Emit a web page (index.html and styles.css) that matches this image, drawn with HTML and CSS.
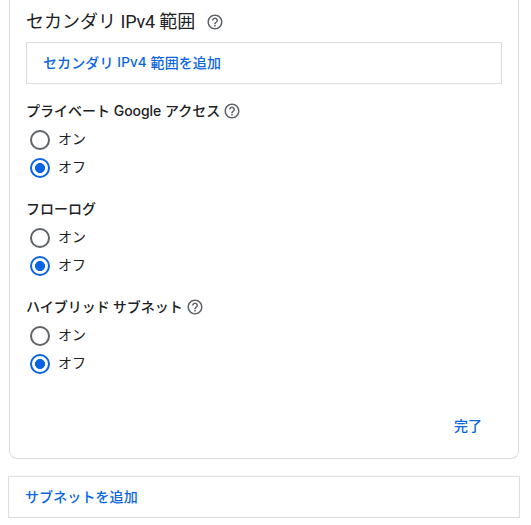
FILE: index.html
```html
<!DOCTYPE html>
<html lang="ja">
<head>
<meta charset="utf-8">
<title>サブネット</title>
<link rel="stylesheet" href="styles.css">
</head>
<body>
<svg class="defs" width="0" height="0" aria-hidden="true">
  <symbol id="help" viewBox="0 0 24 24"><path d="M11 18h2v-2h-2v2zm1-16C6.48 2 2 6.48 2 12s4.480 10 10 10 10-4.480 10-10S17.520 2 12 2zm0 18c-4.410 0-8-3.590-8-8s3.590-8 8-8 8 3.590 8 8-3.590 8-8 8zm0-14c-2.210 0-4 1.790-4 4h2c0-1.100.9-2 2-2s2 .9 2 2c0 2-3 1.750-3 5h2c0-2.250 3-2.500 3-5 0-2.210-1.790-4-4-4z"/></symbol>
</svg>
<section class="card">
  <h2 class="heading"><span>セカンダリ <span class="latin">IPv4</span> 範囲</span><svg class="help"><use href="#help"/></svg></h2>
  <button class="add">セカンダリ <span class="latin">IPv4</span> 範囲を追加</button>
  <div class="group">
    <div class="label"><span>プライベート <span class="latin google">Google</span> アクセス</span><svg class="help"><use href="#help"/></svg></div>
    <label class="option"><input type="radio" name="access">オン</label>
    <label class="option"><input type="radio" name="access" checked>オフ</label>
  </div>
  <div class="group">
    <div class="label"><span>フローログ</span></div>
    <label class="option"><input type="radio" name="logs">オン</label>
    <label class="option"><input type="radio" name="logs" checked>オフ</label>
  </div>
  <div class="group">
    <div class="label"><span>ハイブリッド サブネット</span><svg class="help"><use href="#help"/></svg></div>
    <label class="option"><input type="radio" name="hybrid">オン</label>
    <label class="option"><input type="radio" name="hybrid" checked>オフ</label>
  </div>
  <div class="actions"><button class="done">完了</button></div>
</section>
<button class="add add-subnet">サブネットを追加</button>
</body>
</html>
```
FILE: styles.css
```css
* { box-sizing: border-box; }
body {
  margin: 0 11px 0 8px;
  background: #fff;
  color: #202124;
  font: 14px/20px "Noto Sans CJK JP", sans-serif;
}
.defs { display: block; }
.card {
  height: 459px;
  margin: 0 1px;
  padding: 10px 16px 0;
  border: 1px solid #dadce0;
  border-top: 0;
  border-radius: 0 0 8px 8px;
}
.heading {
  display: flex;
  align-items: center;
  gap: 11px;
  height: 24px;
  margin: 0 0 8px;
  font-size: 18px;
  font-weight: 400;
  line-height: 24px;
}
.heading > span { margin-top: -2px; }
.heading .latin { letter-spacing: -0.2px; }
.heading > span { word-spacing: 0.4px; }
.latin { font-family: Roboto, sans-serif; }
.help { flex: none; width: 18px; height: 18px; fill: #5f6368; }
.add {
  display: flex;
  align-items: center;
  width: 100%;
  height: 42px;
  padding: 0 16px 2px;
  border: 1px solid #dadce0;
  background: #fff;
  color: #0b65e3;
  font: 500 14px/20px "Noto Sans CJK JP", sans-serif;
  letter-spacing: 0.1px;
  word-spacing: 0.6px;
  white-space: pre;
}
.add .latin { font-family: Inter, sans-serif; font-size: 13.5px; }
.group { height: 98px; padding-top: 17px; }
.label {
  display: flex;
  align-items: center;
  gap: 3px;
  height: 20px;
  margin-bottom: 5px;
  font-weight: 500;
}
.label > span { margin-top: -2px; }
.label .google {
  font-family: Inter, sans-serif;
  letter-spacing: -0.1px;
  margin: 0 0.7px;
}
.option {
  display: flex;
  gap: 8px;
  height: 28px;
  padding-left: 4px;
  line-height: 24px;
}
.option input {
  appearance: none;
  width: 20px;
  height: 20px;
  margin: 4px 0 0;
  border: 2px solid #5f6368;
  border-radius: 50%;
}
.option input:checked {
  border-color: #0b65e3;
  background: radial-gradient(circle, #0b65e3 4.7px, transparent 5.3px);
}
.actions { display: flex; justify-content: flex-end; padding: 37px 20px 0 0; }
.done {
  padding: 0;
  border: 0;
  background: none;
  color: #0b65e3;
  font: 500 14px/20px "Noto Sans CJK JP", sans-serif;
}
.add-subnet { margin-top: 17px; }
```
